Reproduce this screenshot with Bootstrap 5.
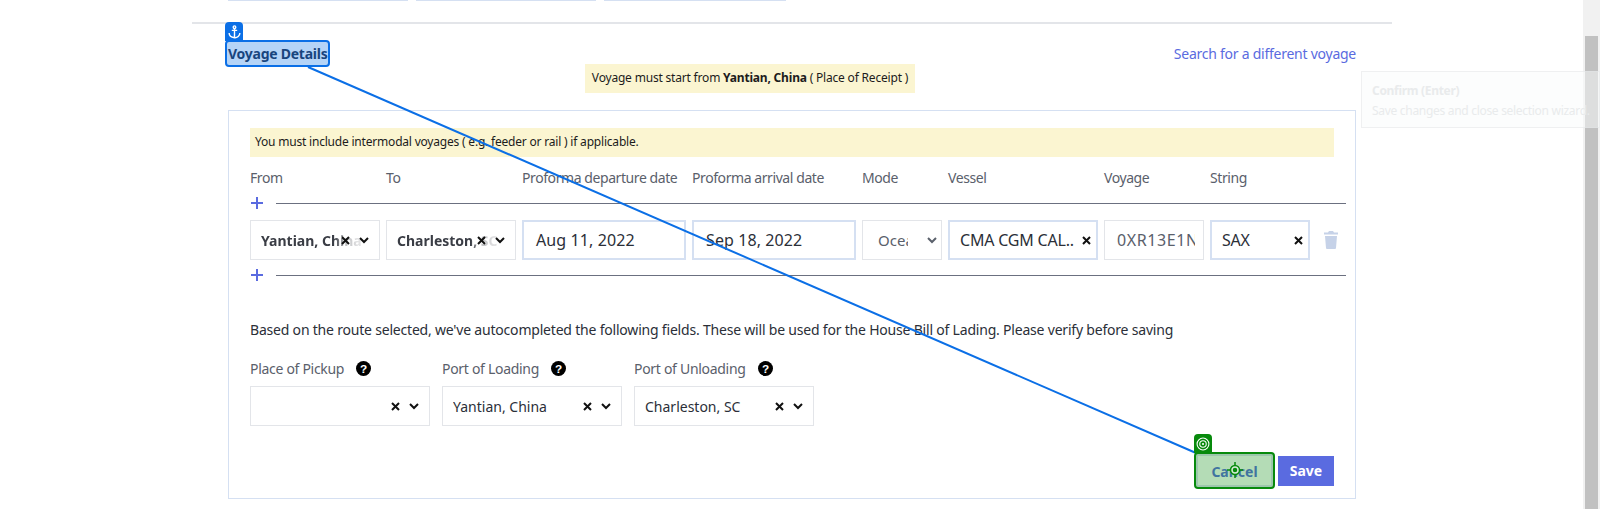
<!DOCTYPE html>
<html lang="en">

<head>
    <meta charset="UTF-8">
    <meta name="viewport" content="width=device-width, initial-scale=1.0">
    <title>Voyage Details</title>
    <link href="https://cdn.jsdelivr.net/npm/bootstrap@5.3.0/dist/css/bootstrap.min.css" rel="stylesheet">
    <style>
        html, body { height: 509px; overflow: hidden; }
        body { font-family: "Noto Sans", "Liberation Sans", sans-serif; color: #2b2f38; background: #fff; font-size: 14px; position: relative; }
        .page-wrap { width: 1200px; margin-left: 192px; }
        .top-tabs { padding-left: 36px; height: 22px; gap: 8px; align-items: flex-start; }
        .top-tabs span { width: 180px; height: 1px; background: #d5e0f2; }
        .top-tabs span:last-child { width: 182px; }
        .page-inner { border-top: 2px solid #e3e5e9; padding: 0 36px; }
        .head-row { height: 86px; }
        .voyage-title { font-size: 14px; font-weight: 700; color: #1f3352; margin: 19px 0 0 0; line-height: 22px; letter-spacing: -.25px; }
        .diff-link { font-size: 14px; color: #5a6be0; text-decoration: none; margin-top: 20px; line-height: 20px; letter-spacing: -.25px; }
        .must-note { position: absolute; left: 585px; top: 64px; width: 330px; height: 29px; background: #fbf5d1; font-size: 12px; color: #1c1c1c; line-height: 27px; text-align: center; white-space: nowrap; letter-spacing: -.19px; }
        .voyage-panel { border: 1px solid #d5e0f2; height: 389px; padding: 17px 21px 0 21px; position: relative; }
        .warn-bar { background: #fbf5d1; height: 29px; line-height: 27px; padding-left: 5px; font-size: 12px; color: #1c1c1c; width: 1084px; letter-spacing: -.2px; }
        .col-labels { margin-top: 11px; height: 20px; line-height: 20px; color: #5a606b; font-size: 14px; white-space: nowrap; letter-spacing: -.42px; }
        .col-labels span { flex: none; }
        .lab-136 { width: 136px; }
        .lab-170 { width: 170px; }
        .lab-86 { width: 86px; }
        .lab-156 { width: 156px; }
        .lab-106 { width: 106px; }
        .add-line { height: 16px; width: 1096px; }
        .add-first { margin-top: 7px; }
        .add-line .plus-ic { width: 14px; height: 14px; margin-right: 12px; flex: none; }
        .add-line i { flex: 1; height: 1px; background: #6b7080; display: block; }
        .field-row { gap: 6px; margin: 9px 0 7px 0; height: 40px; }
        .fake-field { height: 40px; flex: none; border: 1px solid #e3e5e9; display: flex; align-items: center; padding: 0 10px 0 10px; font-size: 14px; white-space: nowrap; overflow: hidden; position: relative; color: #2b2f38; }
        .fake-field.is-blue { border: 2px solid #d5e0f2; }
        .fake-field b { font-weight: 700; color: #3a3d45; }
        .fake-field .val { flex: 1; overflow: hidden; }
        .fake-field.big-txt { font-size: 16px; padding-left: 12px; letter-spacing: .1px; }
        .fake-field.mid-txt { font-size: 16px; padding-right: 5px; letter-spacing: -.2px; }
        .f-130 { width: 130px; }
        .f-164 { width: 164px; }
        .f-80 { width: 80px; padding-right: 4px; }
        .f-150 { width: 150px; }
        .f-100 { width: 100px; }
        /* selected value runs on under the clear icon and fades out */
        .fake-field .fade-val { margin-right: -22px; overflow: visible; -webkit-mask-image: linear-gradient(to right, #000 72%, rgba(0, 0, 0, .35) 82%, rgba(0, 0, 0, .15) 95%); mask-image: linear-gradient(to right, #000 72%, rgba(0, 0, 0, .35) 82%, rgba(0, 0, 0, .15) 95%); }
        .fake-field .mode-val { flex: none; width: 30px; margin-left: 5px; margin-right: auto; color: #5a606b; font-size: 15px; }
        .fake-field.voy-field { padding-right: 8px; }
        .fake-field .voy-val { color: #5a606b; letter-spacing: .6px; margin-left: 2px; }
        .ic-x { width: 9px; height: 9px; flex: none; position: relative; z-index: 1; }
        .ic-chev { width: 10px; height: 7px; flex: none; margin-left: 9px; position: relative; z-index: 1; }
        .trash-ic { width: 14px; height: 18px; margin-left: 8px; align-self: center; flex: none; }
        .auto-text { margin: 37px 0 0 0; line-height: 20px; color: #2b2f38; font-size: 14px; letter-spacing: -.2px; white-space: nowrap; }
        .low-group { margin-top: 19px; gap: 12px; }
        .low-col { width: 180px; flex: none; }
        .low-col .fake-field { width: 180px; }
        .low-label { height: 20px; line-height: 20px; color: #5a606b; display: flex; align-items: center; margin-bottom: 7px; white-space: nowrap; letter-spacing: -.3px; }
        .help-ic { width: 15px; height: 15px; margin-left: 12px; flex: none; position: relative; top: -1px; }
        .save-btn { position: absolute; left: 1049px; top: 345px; width: 56px; height: 30px; background: #5a6be0; color: #fff; border: 0; font-weight: 700; font-size: 14px; border-radius: 0; padding: 0; line-height: 30px; }
        .cancel-btn { position: absolute; left: 968px; top: 345px; width: 75px; height: 30px; background: transparent; color: #5a6be0; border: 0; font-weight: 700; font-size: 14px; border-radius: 0; padding: 0; }
        /* annotation overlay */
        .anno-line { position: absolute; left: 0; top: 0; pointer-events: none; }
        .anno-tag { position: absolute; width: 18px; height: 19px; border-radius: 4px 4px 0 0; display: flex; align-items: center; justify-content: center; }
        .anno-box { position: absolute; border-radius: 4px; }
        .tag-blue { left: 225px; top: 22px; background: #0b6fe6; }
        .box-blue { left: 225px; top: 40px; width: 105px; height: 27px; border: 2px solid #0b6fe6; background: rgba(11, 111, 230, .3); }
        .tag-green { left: 1194px; top: 434px; background: #078a0c; }
        .box-green { left: 1194px; top: 452px; width: 81px; height: 37px; border: 2px solid #078a0c; background: rgba(7, 138, 12, .3); box-shadow: inset 0 0 0 2px #9cc7ac; }
        .target-ic { position: absolute; left: 1227px; top: 462px; }
        .ghost-tip { position: absolute; left: 1361px; top: 71px; width: 239px; height: 57px; border: 1px solid rgba(225, 228, 230, .5); background: rgba(250, 252, 252, .5); padding: 9px 10px; color: #e9ebec; font-size: 12px; line-height: 20px; white-space: nowrap; overflow: hidden; letter-spacing: -.3px; }
        .ghost-tip strong { display: block; }
        .side-scroll { position: absolute; right: 0; top: 0; width: 17px; height: 509px; background: #f1f1f1; }
        .side-scroll div { margin: 36px 2px 0 2px; height: 473px; background: #c1c1c1; }
    </style>
</head>

<body>
    <div class="side-scroll"><div></div></div>

    <div class="page-wrap">
        <div class="top-tabs d-flex"><span></span><span></span><span></span></div>
        <div class="page-inner">
            <div class="head-row d-flex justify-content-between align-items-start">
                <h2 class="voyage-title">Voyage Details</h2>
                <a class="diff-link" href="#">Search for a different voyage</a>
            </div>
            <div class="voyage-panel">
                <div class="warn-bar">You must include intermodal voyages ( e.g. feeder or rail ) if applicable.</div>
                <div class="col-labels d-flex">
                    <span class="lab-136">From</span><span class="lab-136">To</span><span class="lab-170">Proforma departure date</span><span class="lab-170">Proforma arrival date</span><span class="lab-86">Mode</span><span class="lab-156">Vessel</span><span class="lab-106">Voyage</span><span>String</span>
                </div>
                <div class="add-line add-first d-flex align-items-center">
                    <svg class="plus-ic" viewBox="0 0 14 14"><path d="M7 1v12M1 7h12" stroke="#5a6be0" stroke-width="2" fill="none"/></svg><i></i>
                </div>
                <div class="field-row d-flex">
                    <div class="fake-field f-130"><span class="val fade-val"><b>Yantian, China</b></span><svg class="ic-x" viewBox="0 0 9 9"><path d="M1 1l7 7M8 1L1 8" stroke="#111" stroke-width="2" fill="none"/></svg><svg class="ic-chev" viewBox="0 0 10 7"><path d="M1 1l4 4 4-4" stroke="#111" stroke-width="2" fill="none"/></svg></div>
                    <div class="fake-field f-130"><span class="val fade-val"><b>Charleston, SC</b></span><svg class="ic-x" viewBox="0 0 9 9"><path d="M1 1l7 7M8 1L1 8" stroke="#111" stroke-width="2" fill="none"/></svg><svg class="ic-chev" viewBox="0 0 10 7"><path d="M1 1l4 4 4-4" stroke="#111" stroke-width="2" fill="none"/></svg></div>
                    <div class="fake-field is-blue big-txt f-164">Aug 11, 2022</div>
                    <div class="fake-field is-blue big-txt f-164">Sep 18, 2022</div>
                    <div class="fake-field f-80"><span class="val mode-val">Ocean</span><svg class="ic-chev" viewBox="0 0 10 7"><path d="M1 1l4 4 4-4" stroke="#5a606b" stroke-width="2" fill="none"/></svg></div>
                    <div class="fake-field is-blue mid-txt f-150"><span class="val">CMA CGM CAL..</span><svg class="ic-x" viewBox="0 0 9 9"><path d="M1 1l7 7M8 1L1 8" stroke="#111" stroke-width="2" fill="none"/></svg></div>
                    <div class="fake-field mid-txt voy-field f-100"><span class="val voy-val">0XR13E1N</span></div>
                    <div class="fake-field is-blue mid-txt f-100"><span class="val">SAX</span><svg class="ic-x" viewBox="0 0 9 9"><path d="M1 1l7 7M8 1L1 8" stroke="#111" stroke-width="2" fill="none"/></svg></div>
                    <svg class="trash-ic" viewBox="0 0 14 18"><path d="M5 0h4l1 1.500h4v2H0v-2h4zM1 5h12l-1 12a1 1 0 0 1-1 1H3a1 1 0 0 1-1-1z" fill="#c6d2e8"/></svg>
                </div>
                <div class="add-line d-flex align-items-center">
                    <svg class="plus-ic" viewBox="0 0 14 14"><path d="M7 1v12M1 7h12" stroke="#5a6be0" stroke-width="2" fill="none"/></svg><i></i>
                </div>
                <p class="auto-text">Based on the route selected, we've autocompleted the following fields. These will be used for the House Bill of Lading. Please verify before saving</p>
                <div class="low-group d-flex">
                    <div class="low-col">
                        <div class="low-label">Place of Pickup<svg class="help-ic" viewBox="0 0 14 14"><circle cx="7" cy="7" r="7" fill="#000"/><text x="7" y="11" text-anchor="middle" font-size="11" font-weight="700" fill="#fff" font-family="Liberation Sans">?</text></svg></div>
                        <div class="fake-field"><span class="val"></span><svg class="ic-x" viewBox="0 0 9 9"><path d="M1 1l7 7M8 1L1 8" stroke="#111" stroke-width="2" fill="none"/></svg><svg class="ic-chev" viewBox="0 0 10 7"><path d="M1 1l4 4 4-4" stroke="#111" stroke-width="2" fill="none"/></svg></div>
                    </div>
                    <div class="low-col">
                        <div class="low-label">Port of Loading<svg class="help-ic" viewBox="0 0 14 14"><circle cx="7" cy="7" r="7" fill="#000"/><text x="7" y="11" text-anchor="middle" font-size="11" font-weight="700" fill="#fff" font-family="Liberation Sans">?</text></svg></div>
                        <div class="fake-field"><span class="val">Yantian, China</span><svg class="ic-x" viewBox="0 0 9 9"><path d="M1 1l7 7M8 1L1 8" stroke="#111" stroke-width="2" fill="none"/></svg><svg class="ic-chev" viewBox="0 0 10 7"><path d="M1 1l4 4 4-4" stroke="#111" stroke-width="2" fill="none"/></svg></div>
                    </div>
                    <div class="low-col">
                        <div class="low-label">Port of Unloading<svg class="help-ic" viewBox="0 0 14 14"><circle cx="7" cy="7" r="7" fill="#000"/><text x="7" y="11" text-anchor="middle" font-size="11" font-weight="700" fill="#fff" font-family="Liberation Sans">?</text></svg></div>
                        <div class="fake-field"><span class="val">Charleston, SC</span><svg class="ic-x" viewBox="0 0 9 9"><path d="M1 1l7 7M8 1L1 8" stroke="#111" stroke-width="2" fill="none"/></svg><svg class="ic-chev" viewBox="0 0 10 7"><path d="M1 1l4 4 4-4" stroke="#111" stroke-width="2" fill="none"/></svg></div>
                    </div>
                </div>
                <button class="btn cancel-btn" type="button">Cancel</button>
                <button class="btn save-btn" type="button">Save</button>
            </div>
        </div>
    </div>

    <div class="must-note">Voyage must start from <b>Yantian, China</b> ( Place of Receipt )</div>

    <div class="ghost-tip"><strong>Confirm (Enter)</strong>Save changes and close selection wizard.</div>

    <!-- annotation overlay -->
    <svg class="anno-line" width="1600" height="509"><line x1="308" y1="67" x2="1196" y2="453" stroke="#0b6fe6" stroke-width="2"/></svg>
    <div class="anno-tag tag-blue"><svg width="13" height="14" viewBox="0 0 12 13" fill="none" stroke="#fff" stroke-width="1.3"><circle cx="6" cy="2" r="1.2"/><path d="M6 3.200V12M3.500 5h5M1 7.500c0 2.500 2.500 4 5 4.300s5-1.800 5-4.300"/></svg></div>
    <div class="anno-box box-blue"></div>
    <div class="anno-tag tag-green"><svg width="14" height="14" viewBox="0 0 13 13" fill="none" stroke="#fff"><circle cx="6.500" cy="6.500" r="5.500"/><circle cx="6.500" cy="6.500" r="3"/><circle cx="6.500" cy="6.500" r="1" fill="#fff" stroke="none"/></svg></div>
    <div class="anno-box box-green"></div>
    <svg class="target-ic" width="16" height="16" viewBox="0 0 16 16" fill="none" stroke="#078a0c" stroke-width="1.500"><circle cx="8" cy="8" r="4.500" fill="#d7ecd8"/><circle cx="8" cy="8" r="1.500" fill="#078a0c"/><path d="M8 0v3M8 13v3M0 8h3M13 8h3"/></svg>

    <script src="https://cdn.jsdelivr.net/npm/bootstrap@5.3.0/dist/js/bootstrap.bundle.min.js"></script>
</body>

</html>
